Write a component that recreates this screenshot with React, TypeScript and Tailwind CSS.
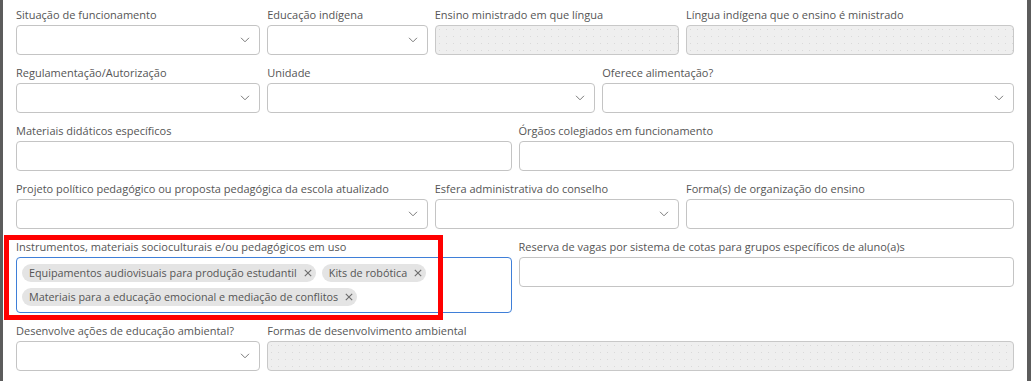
import React from 'react';

type Field = {
  label: string;
  span: string;
  kind: 'select' | 'text' | 'disabled' | 'multi';
};

const rows: Field[][] = [
  [
    { label: 'Situação de funcionamento', span: 'col-span-3', kind: 'select' },
    { label: 'Educação indígena', span: 'col-span-2', kind: 'select' },
    { label: 'Ensino ministrado em que língua', span: 'col-span-3', kind: 'disabled' },
    { label: 'Língua indígena que o ensino é ministrado', span: 'col-span-4', kind: 'disabled' },
  ],
  [
    { label: 'Regulamentação/Autorização', span: 'col-span-3', kind: 'select' },
    { label: 'Unidade', span: 'col-span-4', kind: 'select' },
    { label: 'Oferece alimentação?', span: 'col-span-5', kind: 'select' },
  ],
  [
    { label: 'Materiais didáticos específicos', span: 'col-span-6', kind: 'text' },
    { label: 'Órgãos colegiados em funcionamento', span: 'col-span-6', kind: 'text' },
  ],
  [
    { label: 'Projeto político pedagógico ou proposta pedagógica da escola atualizado', span: 'col-span-5', kind: 'select' },
    { label: 'Esfera administrativa do conselho', span: 'col-span-3', kind: 'select' },
    { label: 'Forma(s) de organização do ensino', span: 'col-span-4', kind: 'text' },
  ],
  [
    { label: 'Instrumentos, materiais socioculturais e/ou pedagógicos em uso', span: 'col-span-6', kind: 'multi' },
    { label: 'Reserva de vagas por sistema de cotas para grupos específicos de aluno(a)s', span: 'col-span-6', kind: 'text' },
  ],
  [
    { label: 'Desenvolve ações de educação ambiental?', span: 'col-span-3', kind: 'select' },
    { label: 'Formas de desenvolvimento ambiental', span: 'col-span-9', kind: 'disabled' },
  ],
];

const chips = [
  'Equipamentos audiovisuais para produção estudantil',
  'Kits de robótica',
  'Materiais para a educação emocional e mediação de conflitos',
];

function Chevron() {
  return (
    <svg width="10" height="6" viewBox="0 0 10 6" fill="none" className="shrink-0">
      <path d="M1 0.8l4 4 4-4" stroke="#7a7a7a" strokeWidth="1" />
    </svg>
  );
}

function Cross() {
  return (
    <svg width="8" height="8" viewBox="0 0 8 8" fill="none" className="shrink-0">
      <path d="M0.8 0.8l6.4 6.4M7.2 0.8l-6.4 6.4" stroke="#6b6b6b" strokeWidth="1.1" />
    </svg>
  );
}

function Control({ kind }: { kind: Field['kind'] }) {
  if (kind === 'select') {
    return (
      <div className="h-[30px] rounded-[4px] border border-[#c4c4c4] bg-white flex items-center justify-end pr-[9px]">
        <Chevron />
      </div>
    );
  }
  if (kind === 'disabled') {
    return (
      <div className="h-[30px] rounded-[4px] border border-[#c8c8c8] bg-[#efefef] bg-[radial-gradient(#dadada_0.6px,transparent_0.9px)] bg-[length:7px_7px]" />
    );
  }
  if (kind === 'multi') {
    return (
      <div className="h-[56px] rounded-[4px] border border-[#3f7fd8] bg-white px-[5px] py-[6px] flex flex-wrap content-start gap-[6px]">
        {chips.map(c => (
          <span
            key={c}
            className="h-[18px] rounded-full bg-[#e4e4e4] pl-[7px] pr-[4px] flex items-center gap-[7px] text-[10.8px] leading-[18px] text-[#555]"
          >
            {c}
            <Cross />
          </span>
        ))}
      </div>
    );
  }
  return <div className="h-[30px] rounded-[4px] border border-[#c4c4c4] bg-white" />;
}

export default function App() {
  return (
    <div className="relative h-screen w-full flex bg-white overflow-hidden font-['Open_Sans',sans-serif]">
      <div className="w-[3px] bg-[#5c5c5c]" />
      <div className="flex-1 px-[13px] pt-[7px]">
        <div className="grid grid-cols-12 gap-x-[7px] gap-y-[10px]">
          {rows.flat().map(f => (
            <div key={f.label} className={f.span}>
              <div className="text-[11px] leading-[16px] mb-[2px] text-[#555] whitespace-nowrap">{f.label}</div>
              <Control kind={f.kind} />
            </div>
          ))}
        </div>
      </div>
      <div className="w-[4px] bg-[#5c5c5c]" />

      <div className="absolute left-[4px] top-[235px] w-[439px] h-[85px] border-[5px] border-[#ff0000]" />
    </div>
  );
}
